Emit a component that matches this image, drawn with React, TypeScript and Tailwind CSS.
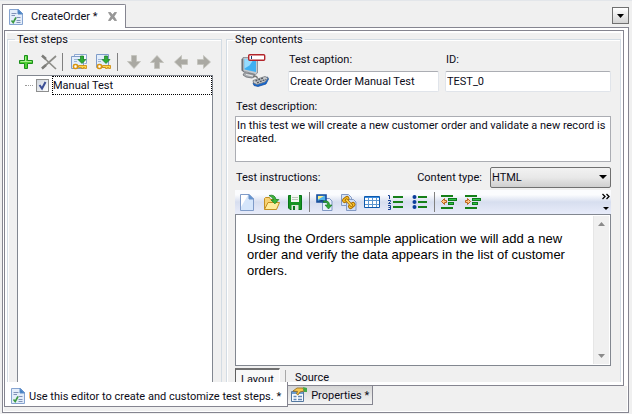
import { ReactNode } from "react";

function SheetIcon() {
  return (
    <svg width="14" height="16" viewBox="0 0 14 16" aria-hidden="true">
      <path d="M.5.5h9l4 4v11H.5z" fill="#e3edfa" stroke="#86a4d0" />
      <path d="M9 .5v4.5h4.5z" fill="#3f7fc4" stroke="#5b8cc8" />
      <path d="M2.500 4.500h5M2.500 6.500h3.500M7.500 8.500h4M7.500 11.500h4M7.500 13.500h4" stroke="#8092b8" />
      <path d="M2.500 11.500l1.700 2L7 8.500" fill="none" stroke="#3d9a42" strokeWidth="1.600" />
    </svg>
  );
}

function AddIcon() {
  return (
    <svg width="16" height="16" viewBox="0 0 16 16" aria-hidden="true">
      <path d="M6.500 1.500h3v5h5v3h-5v5h-3v-5h-5v-3h5z" fill="#4fd033" stroke="#1b8f1b" strokeLinejoin="round" />
      <path d="M7.500 2.500v5M2.500 7.500h11" stroke="#a9f08f" />
    </svg>
  );
}

function RemoveIcon() {
  return (
    <svg width="16" height="16" viewBox="0 0 16 16" aria-hidden="true">
      <path d="M1 2L15 15M15 2L1 14.500" stroke="#8d8d88" strokeWidth="1.700" />
      <path d="M1 1.500l4 3.500M1 14.500l4-3.500" stroke="#7d7d79" strokeWidth="2.400" />
    </svg>
  );
}

function KeyDocIcon({ stacked }: { stacked?: boolean }) {
  return (
    <svg width="16" height="16" viewBox="0 0 16 16" aria-hidden="true">
      {stacked && <path d="M3.500 2.500v-2h12v9h-2" fill="#f4f8fe" stroke="#8fa9d2" />}
      <path d={stacked ? "M.5 2.500h12v12H.5z" : "M1.500.500h12v13h-12z"} fill="#e3eefb" stroke="#7f9cc9" />
      <path d="M3 5.500h4M3 7.500h3" stroke="#9db4d8" />
      <path d="M9.500 2h3v3.500h2.500l-4 4-4-4h2.500z" fill="#2eae36" stroke="#137a20" strokeWidth=".7" />
      <rect x="2.500" y="10.500" width="4" height="4" rx="1.500" fill="#fff" stroke="#d9940f" strokeWidth="1.600" />
      <path d="M7.500 11.500h8v3h-2v-1h-1v1h-2v-1h-3z" fill="#ffd34a" stroke="#c98508" strokeWidth=".8" />
    </svg>
  );
}

function ArrowIcon({ turn }: { turn: number }) {
  return (
    <svg width="16" height="16" viewBox="0 0 16 16" aria-hidden="true">
      <path
        d="M5.500 1.500h5v6h4L8 14.500 1.500 7.500h4z"
        fill="#aaa9a3"
        stroke="#c2c1bb"
        strokeWidth=".8"
        transform={`rotate(${turn} 8 8)`}
      />
    </svg>
  );
}

function ComputerIcon() {
  return (
    <svg width="30" height="35" viewBox="0 0 30 35" aria-hidden="true">
      <path d="M1.500 6L4 4.500v15l-2.500-2z" fill="#5f646b" />
      <path d="M3 4.500h14.500V20l-2 1.500L3 18z" fill="#c3c8cd" stroke="#80858b" strokeWidth=".8" />
      <path d="M4.500 6l11.500.500v12.500L4.500 16.500z" fill="#3fb0f2" />
      <path d="M4.500 6l9 .5-4 6-5 3z" fill="#96dcff" />
      <path d="M4.500 19.500l10 2 .5 2-3 1.500-6-1-3-2z" fill="#a9acb0" stroke="#6a6d72" strokeWidth=".8" />
      <path d="M6 21.500l7 1.500" stroke="#e9ebed" />
      <path d="M13 23.500q4-1 4.500 2" fill="none" stroke="#777" strokeWidth="1.400" />
      <path d="M13 30l14.500-6 1 2-2.500 5-8 2.500-4-1z" fill="#1769d2" stroke="#0d4696" strokeWidth=".7" />
      <path d="M13 27.500l12-4 3 1.500-3 4-8 2.500-3.500-1.500z" fill="#c9ccd0" stroke="#6f7379" strokeWidth=".8" />
      <path d="M15.500 28l8-3M17 29.800l9-3.500" stroke="#555a60" strokeWidth="1.400" strokeDasharray="2 1" />
      <rect x="8.700" y="1.700" width="16" height="5.500" rx="1" fill="#fff" stroke="#b3252b" strokeWidth="1.400" />
      <path d="M11.500 3v3" stroke="#17366e" />
    </svg>
  );
}

function NewIcon() {
  return (
    <svg width="14" height="17" viewBox="0 0 14 17" aria-hidden="true">
      <path d="M.5.5h8.500l4.500 4.500v11.500H.5z" fill="#d5e6fb" stroke="#7f9bc8" />
      <path d="M1 1h7L1 13z" fill="#fff" />
      <path d="M9 .5V5h4.500z" fill="#5d94d4" stroke="#6c92c8" />
    </svg>
  );
}

function OpenIcon() {
  return (
    <svg width="17" height="17" viewBox="0 0 17 17" aria-hidden="true">
      <path d="M1.500 15V4.500l1-1h4l1 2h6V15z" fill="#f7d273" stroke="#c48f22" />
      <path d="M1.500 15.500L5 8.500h11.500l-3 7z" fill="#ffec9d" stroke="#c48f22" />
      <path d="M6 1.500q6-1.500 7 4h2.800L12 9.800 8 6h2.500q-.5-3-4.500-4.500z" fill="#40b53a" stroke="#1a8225" strokeWidth=".8" />
    </svg>
  );
}

function SaveIcon() {
  return (
    <svg width="14" height="15" viewBox="0 0 14 15" aria-hidden="true">
      <path d="M.5.5h13v14H2l-1.500-1.500z" fill="#169322" stroke="#08751a" />
      <path d="M3 0h8v7H3z" fill="#f4f7f3" />
      <path d="M4 2.500h6M4 4.500h6" stroke="#bcc7ba" />
      <path d="M3.500 10h7v5h-7z" fill="#dce6db" />
      <path d="M5 11h2v4H5z" fill="#08751a" />
    </svg>
  );
}

function ImageIcon() {
  return (
    <svg width="17" height="17" viewBox="0 0 17 17" aria-hidden="true">
      <path d="M6.500 4.500h7l2.500 2.500v9.500H6.500z" fill="#e8f0fc" stroke="#8098c4" />
      <path d="M1 1h9v7H1z" fill="#50b2ec" stroke="#174c9d" strokeWidth="1.600" />
      <path d="M2 2h6L2 5.500z" fill="#fff08a" />
      <path d="M2 6.800q4-1.500 7 0v.7H2z" fill="#123c7c" />
      <path d="M7.500 8.500q4-1 4 2.500H9l3.500 4 3.500-4h-2.500q0-5-6-4z" fill="#31a936" stroke="#167022" strokeWidth=".6" />
    </svg>
  );
}

function LinkIcon() {
  return (
    <svg width="17" height="17" viewBox="0 0 17 17" aria-hidden="true">
      <path d="M1.500.500h7l3 3v8h-10z" fill="#d6e4f8" stroke="#8299c4" />
      <path d="M6.500 5.500h7l2.500 2.500v8.500H6.500z" fill="#cfdef6" stroke="#8299c4" />
      <g fill="none" strokeLinecap="round">
        <path d="M4.500 6.500l2.500-2M10.500 12.500l2.500-2" stroke="#a66b00" strokeWidth="5" />
        <path d="M4.500 6.500l2.500-2M10.500 12.500l2.500-2" stroke="#f5bd24" strokeWidth="3.200" />
        <path d="M5 6.200l1.500-1.200M11.200 12l1.500-1.200" stroke="#8d651a" />
        <path d="M6.500 6l5 5.500" stroke="#a66b00" strokeWidth="3" />
        <path d="M6.500 6l5 5.500" stroke="#ffd34d" strokeWidth="1.500" />
      </g>
    </svg>
  );
}

function TableIcon() {
  return (
    <svg width="16" height="12" viewBox="0 0 16 12" aria-hidden="true">
      <path d="M.5.5h15v11H.5z" fill="#fff" />
      <path d="M4.500 1v10M8.500 1v10M12.500 1v10M1 4.500h14M1 8.500h14" stroke="#5b95cf" />
      <path d="M.5.5h15v11H.5z" fill="none" stroke="#0c59ad" />
      <path d="M1 1.500h14" stroke="#3a8be0" />
    </svg>
  );
}

function NumberListIcon() {
  return (
    <svg width="16" height="15" viewBox="0 0 16 15" aria-hidden="true">
      <path d="M5 2h10M5 7h10M5 12h10" stroke="#168019" strokeWidth="2" />
      <path
        d="M0 .5h1.500V4M0 5.500h2.500v1L.5 8.500H3M0 10.500h2.500v4H0M.5 12.500h2"
        fill="none"
        stroke="#174193"
      />
    </svg>
  );
}

function BulletListIcon() {
  return (
    <svg width="16" height="15" viewBox="0 0 16 15" aria-hidden="true">
      <path d="M6 2h9M6 7h9M6 12h9" stroke="#168019" strokeWidth="2" />
      <g fill="#0b3d9c">
        <circle cx="2.500" cy="2" r="2" />
        <circle cx="2.500" cy="7" r="2" />
        <circle cx="2.500" cy="12" r="2" />
      </g>
    </svg>
  );
}

function IndentIcon({ out }: { out?: boolean }) {
  return (
    <svg width="16" height="14" viewBox="0 0 16 14" aria-hidden="true">
      <path d="M0 1h12M0 13h12" stroke="#168019" strokeWidth="2" />
      <path d="M7 3h9v3H7zM7 7h6v3H7z" fill="#0f7a1c" />
      <path d="M8 4.500h7M8 8.500h4" stroke="#2fc247" />
      <path
        d={out ? "M.5 6.500L3.500 3.500v2h2v2h-2v2z" : "M5.500 6.500L2.500 3.500v2h-2v2h2v2z"}
        fill="#ffc582"
        stroke="#bb651a"
      />
    </svg>
  );
}

function PropertiesIcon() {
  return (
    <svg width="16" height="16" viewBox="0 0 16 16" aria-hidden="true">
      <path d="M.5 4.500h12v10H.5z" fill="#f6faff" stroke="#53779f" />
      <path d="M1 5h11v2H1z" fill="#6c9dd0" />
      <path d="M2.500 9.500h3M2.500 12.500h3M7 9.500h4M7 12.500h4" stroke="#6487b4" strokeWidth="1.500" />
      <path d="M2 4l4-3 6 0 1 3-4 1-2 3-1.500-1 1-2.500z" fill="#f7c54c" stroke="#8e671a" strokeWidth=".8" />
      <path d="M12 0l4 1v4h-3z" fill="#43aa47" />
    </svg>
  );
}

function ToolButton({ label, wide, children }: { label: string; wide?: boolean; children: ReactNode }) {
  return (
    <button
      type="button"
      aria-label={label}
      className={`${wide ? "w-6" : "w-[23px]"} flex h-5 shrink-0 items-center justify-center`}
    >
      {children}
    </button>
  );
}

const groupBox =
  "min-w-0 border border-b-0 border-[#d3dce4] shadow-[inset_1px_1px_0_#fff] flex flex-col";
const textField =
  "h-[21px] w-full rounded-xs border border-[#e0e4ea] border-t-[#abadb3] bg-white px-px outline-none";

export default function App() {
  return (
    <div className="flex h-screen min-h-96 flex-col overflow-hidden border-t border-[#e3e6ea] bg-[#f0f0f0] pr-[3px] pb-px pl-0.5 font-[Roboto,'DejaVu_Sans_Condensed',sans-serif] text-[11px] leading-[13px] text-[#0c0c18]">
      <header className="flex h-[26px] shrink-0 items-end justify-between">
        <div className="z-10 -mb-px flex h-6 items-center rounded-tr-xs border border-b-0 border-[#858590] bg-white pr-2 pl-1.5">
          <SheetIcon />
          <span className="ml-2">CreateOrder *</span>
          <button type="button" aria-label="Close tab" className="ml-[11px]">
            <svg width="9" height="9" viewBox="0 0 9 9" aria-hidden="true">
              <path d="M.5.500h2L4.500 3l2-2.500h2L6 4.500l2.500 4h-2l-2-2.500-2 2.500h-2l2.500-4z" fill="#999" stroke="#888" strokeWidth=".7" />
            </svg>
          </button>
        </div>
        <button
          type="button"
          aria-label="Tab list"
          className="mb-[3px] flex size-[17px] items-center justify-center border border-[#707070] bg-linear-to-b from-white to-[#d4d4d4]"
        >
          <svg width="7" height="4" viewBox="0 0 7 4" aria-hidden="true">
            <path d="M0 0h7L3.500 4z" fill="#000" />
          </svg>
        </button>
      </header>

      <div className="flex min-h-0 flex-1 flex-col border border-[#858590] bg-white pt-0.5 pr-1 pb-px pl-px">
        <main className="flex min-h-0 flex-1 border border-[#858590] bg-white px-0.5 pt-0.5 pb-[3px]">
          <div className="flex min-h-0 min-w-0 flex-1 gap-1 overflow-hidden bg-[#f0f0f0]">
            <fieldset className={`${groupBox} w-[215px] shrink-0 pr-2 pl-[9px]`}>
              <legend className="-ml-0.5 px-0.5">Test steps</legend>
              <div className="flex h-full min-h-0 flex-col">
                <div className="mt-1 -ml-[3px] flex h-6 shrink-0 items-center">
                  <ToolButton label="Add step">
                    <AddIcon />
                  </ToolButton>
                  <ToolButton label="Remove step">
                    <RemoveIcon />
                  </ToolButton>
                  <span className="mr-1 ml-0.5 h-[18px] w-px shrink-0 bg-[#808080]" />
                  <ToolButton label="Add keyword tests" wide>
                    <KeyDocIcon stacked />
                  </ToolButton>
                  <ToolButton label="Add keyword test" wide>
                    <KeyDocIcon />
                  </ToolButton>
                  <span className="mr-1 ml-0.5 h-[18px] w-px shrink-0 bg-[#808080]" />
                  <ToolButton label="Move down">
                    <ArrowIcon turn={0} />
                  </ToolButton>
                  <ToolButton label="Move up" wide>
                    <ArrowIcon turn={180} />
                  </ToolButton>
                  <ToolButton label="Outdent step">
                    <ArrowIcon turn={90} />
                  </ToolButton>
                  <ToolButton label="Indent step">
                    <ArrowIcon turn={270} />
                  </ToolButton>
                </div>
                <div className="mt-px min-h-0 flex-1 border border-b-0 border-[#828790] bg-white">
                  <label className="flex h-[19px] items-center">
                    <span className="ml-[7px] w-2 border-t border-dotted border-[#999]" />
                    <span className="relative ml-[3px] size-[13px]">
                      <input
                        type="checkbox"
                        defaultChecked
                        className="peer block size-[13px] appearance-none border border-[#8e8f8f] bg-linear-to-br from-[#cfd5dd] to-white"
                      />
                      <svg
                        className="pointer-events-none absolute inset-0 hidden peer-checked:block"
                        width="13"
                        height="13"
                        viewBox="0 0 13 13"
                        aria-hidden="true"
                      >
                        <path d="M3.500 6l2.500 3.500L9.500 3" fill="none" stroke="#3c4f96" strokeWidth="2" />
                      </svg>
                    </span>
                    <span className="ml-[3px] flex h-[19px] flex-1 items-center border border-dotted border-black">
                      Manual Test
                    </span>
                  </label>
                </div>
              </div>
            </fieldset>

            <fieldset className={`${groupBox} flex-1 pr-[9px] pl-2`}>
              <legend className="-ml-0.5 px-0.5">Step contents</legend>
              <div className="flex h-full min-h-0 flex-col">
                <div className="mt-[7px] flex shrink-0 pl-[5px]">
                  <ComputerIcon />
                  <label className="ml-[18px] flex w-[151px] shrink-0 flex-col gap-[5px]">
                    <span className="pl-px">Test caption:</span>
                    <input type="text" defaultValue="Create Order Manual Test" className={textField} />
                  </label>
                  <label className="ml-1.5 flex min-w-0 flex-1 flex-col gap-[5px]">
                    <span className="pl-px">ID:</span>
                    <input type="text" defaultValue="TEST_0" className={textField} />
                  </label>
                </div>
                <label className="mt-2 flex shrink-0 flex-col gap-[3px]">
                  <span className="pl-px">Test description:</span>
                  <textarea
                    defaultValue="In this test we will create a new customer order and validate a new record is created."
                    className="block h-[46px] w-full resize-none overflow-hidden border border-[#abadb3] bg-white px-px pt-0.5 outline-none"
                  />
                </label>
                <div className="mt-[5px] flex h-[21px] shrink-0 items-center">
                  <span className="flex-1 pl-px">Test instructions:</span>
                  <label htmlFor="content-type" className="mr-2">
                    Content type:
                  </label>
                  <div className="relative">
                    <select
                      id="content-type"
                      className="block h-[21px] w-[121px] appearance-none rounded-xs border border-[#707070] bg-linear-to-b from-[#f2f2f2] via-[#e8e8e8] to-[#cfcfcf] px-px outline-none"
                    >
                      <option>HTML</option>
                    </select>
                    <svg
                      className="pointer-events-none absolute top-2 right-1"
                      width="8"
                      height="4"
                      viewBox="0 0 8 4"
                      aria-hidden="true"
                    >
                      <path d="M0 0h8L4 4z" fill="#000" />
                    </svg>
                  </div>
                </div>
                <div className="mt-0.5 flex h-6 shrink-0 items-center bg-linear-to-b from-[#fbfcfe] from-20% via-[#d7deef] via-50% to-[#e8ecfa]">
                  <ToolButton label="New" wide>
                    <NewIcon />
                  </ToolButton>
                  <ToolButton label="Open" wide>
                    <OpenIcon />
                  </ToolButton>
                  <ToolButton label="Save">
                    <SaveIcon />
                  </ToolButton>
                  <span className="mx-[3px] h-5 w-px shrink-0 bg-[#808080]" />
                  <ToolButton label="Insert image">
                    <ImageIcon />
                  </ToolButton>
                  <ToolButton label="Insert link" wide>
                    <LinkIcon />
                  </ToolButton>
                  <ToolButton label="Insert table" wide>
                    <TableIcon />
                  </ToolButton>
                  <ToolButton label="Numbered list" wide>
                    <NumberListIcon />
                  </ToolButton>
                  <ToolButton label="Bulleted list" wide>
                    <BulletListIcon />
                  </ToolButton>
                  <span className="mx-0.5 h-5 w-px shrink-0 bg-[#808080]" />
                  <ToolButton label="Decrease indent" wide>
                    <IndentIcon out />
                  </ToolButton>
                  <ToolButton label="Increase indent" wide>
                    <IndentIcon />
                  </ToolButton>
                  <button type="button" aria-label="More tools" className="mr-px ml-auto">
                    <svg width="8" height="18" viewBox="0 0 8 18" aria-hidden="true">
                      <path d="M.5 1l2.500 2.500L.5 6M4.500 1L7 3.500 4.500 6" fill="none" stroke="#000" strokeWidth="1.300" />
                      <path d="M1 14h6l-3 3z" fill="#000" />
                    </svg>
                  </button>
                </div>
                <div className="flex min-h-0 flex-1 border border-[#828790] bg-white p-px">
                  <p className="min-w-0 flex-1 py-[15px] pr-6 pl-2.5 font-['Liberation_Sans',Arial,sans-serif] text-[13px] leading-4 text-black">
                    Using the Orders sample application we will add a new order and verify the data appears in the
                    list of customer orders.
                  </p>
                  <div className="flex w-4 shrink-0 flex-col items-center justify-between border-l border-[#e6e6e6] bg-[#f0f0f0] py-1.5">
                    <svg width="7" height="4" viewBox="0 0 7 4" aria-hidden="true">
                      <path d="M0 4h7L3.500 0z" fill="#8a8a8a" />
                    </svg>
                    <svg width="7" height="4" viewBox="0 0 7 4" aria-hidden="true">
                      <path d="M0 0h7L3.500 4z" fill="#8a8a8a" />
                    </svg>
                  </div>
                </div>
                <div className="mt-0.5 flex h-3.5 shrink-0 items-start overflow-hidden">
                  <button
                    type="button"
                    className="h-5 border border-t-2 border-r-white border-b-white border-l-[#606060] border-t-[#707070] bg-[#f8f8f8] px-[5px] pt-px leading-[13px]"
                  >
                    Layout
                  </button>
                  <span className="mx-[5px] mt-0.5 h-4 w-px bg-[#a8a8a8]" />
                  <button type="button" className="px-1 pt-[3px] leading-[13px]">
                    Source
                  </button>
                </div>
              </div>
            </fieldset>
          </div>
        </main>

        <nav className="-mr-[3px] flex h-[25px] shrink-0 items-start bg-[#f0f0f0]">
          <button
            type="button"
            className="z-10 -mt-1 flex h-[25px] items-center border border-t-0 border-[#858590] bg-white px-1.5 pt-1"
          >
            <SheetIcon />
            <span className="ml-1 whitespace-nowrap">Use this editor to create and customize test steps. *</span>
          </button>
          <button
            type="button"
            className="-mt-px -ml-px flex h-5 items-center border border-[#858590] bg-linear-to-b from-[#d6d6d6] to-[#f4f4f4] px-[3px]"
          >
            <PropertiesIcon />
            <span className="ml-1 whitespace-nowrap">Properties *</span>
          </button>
        </nav>
      </div>
    </div>
  );
}
